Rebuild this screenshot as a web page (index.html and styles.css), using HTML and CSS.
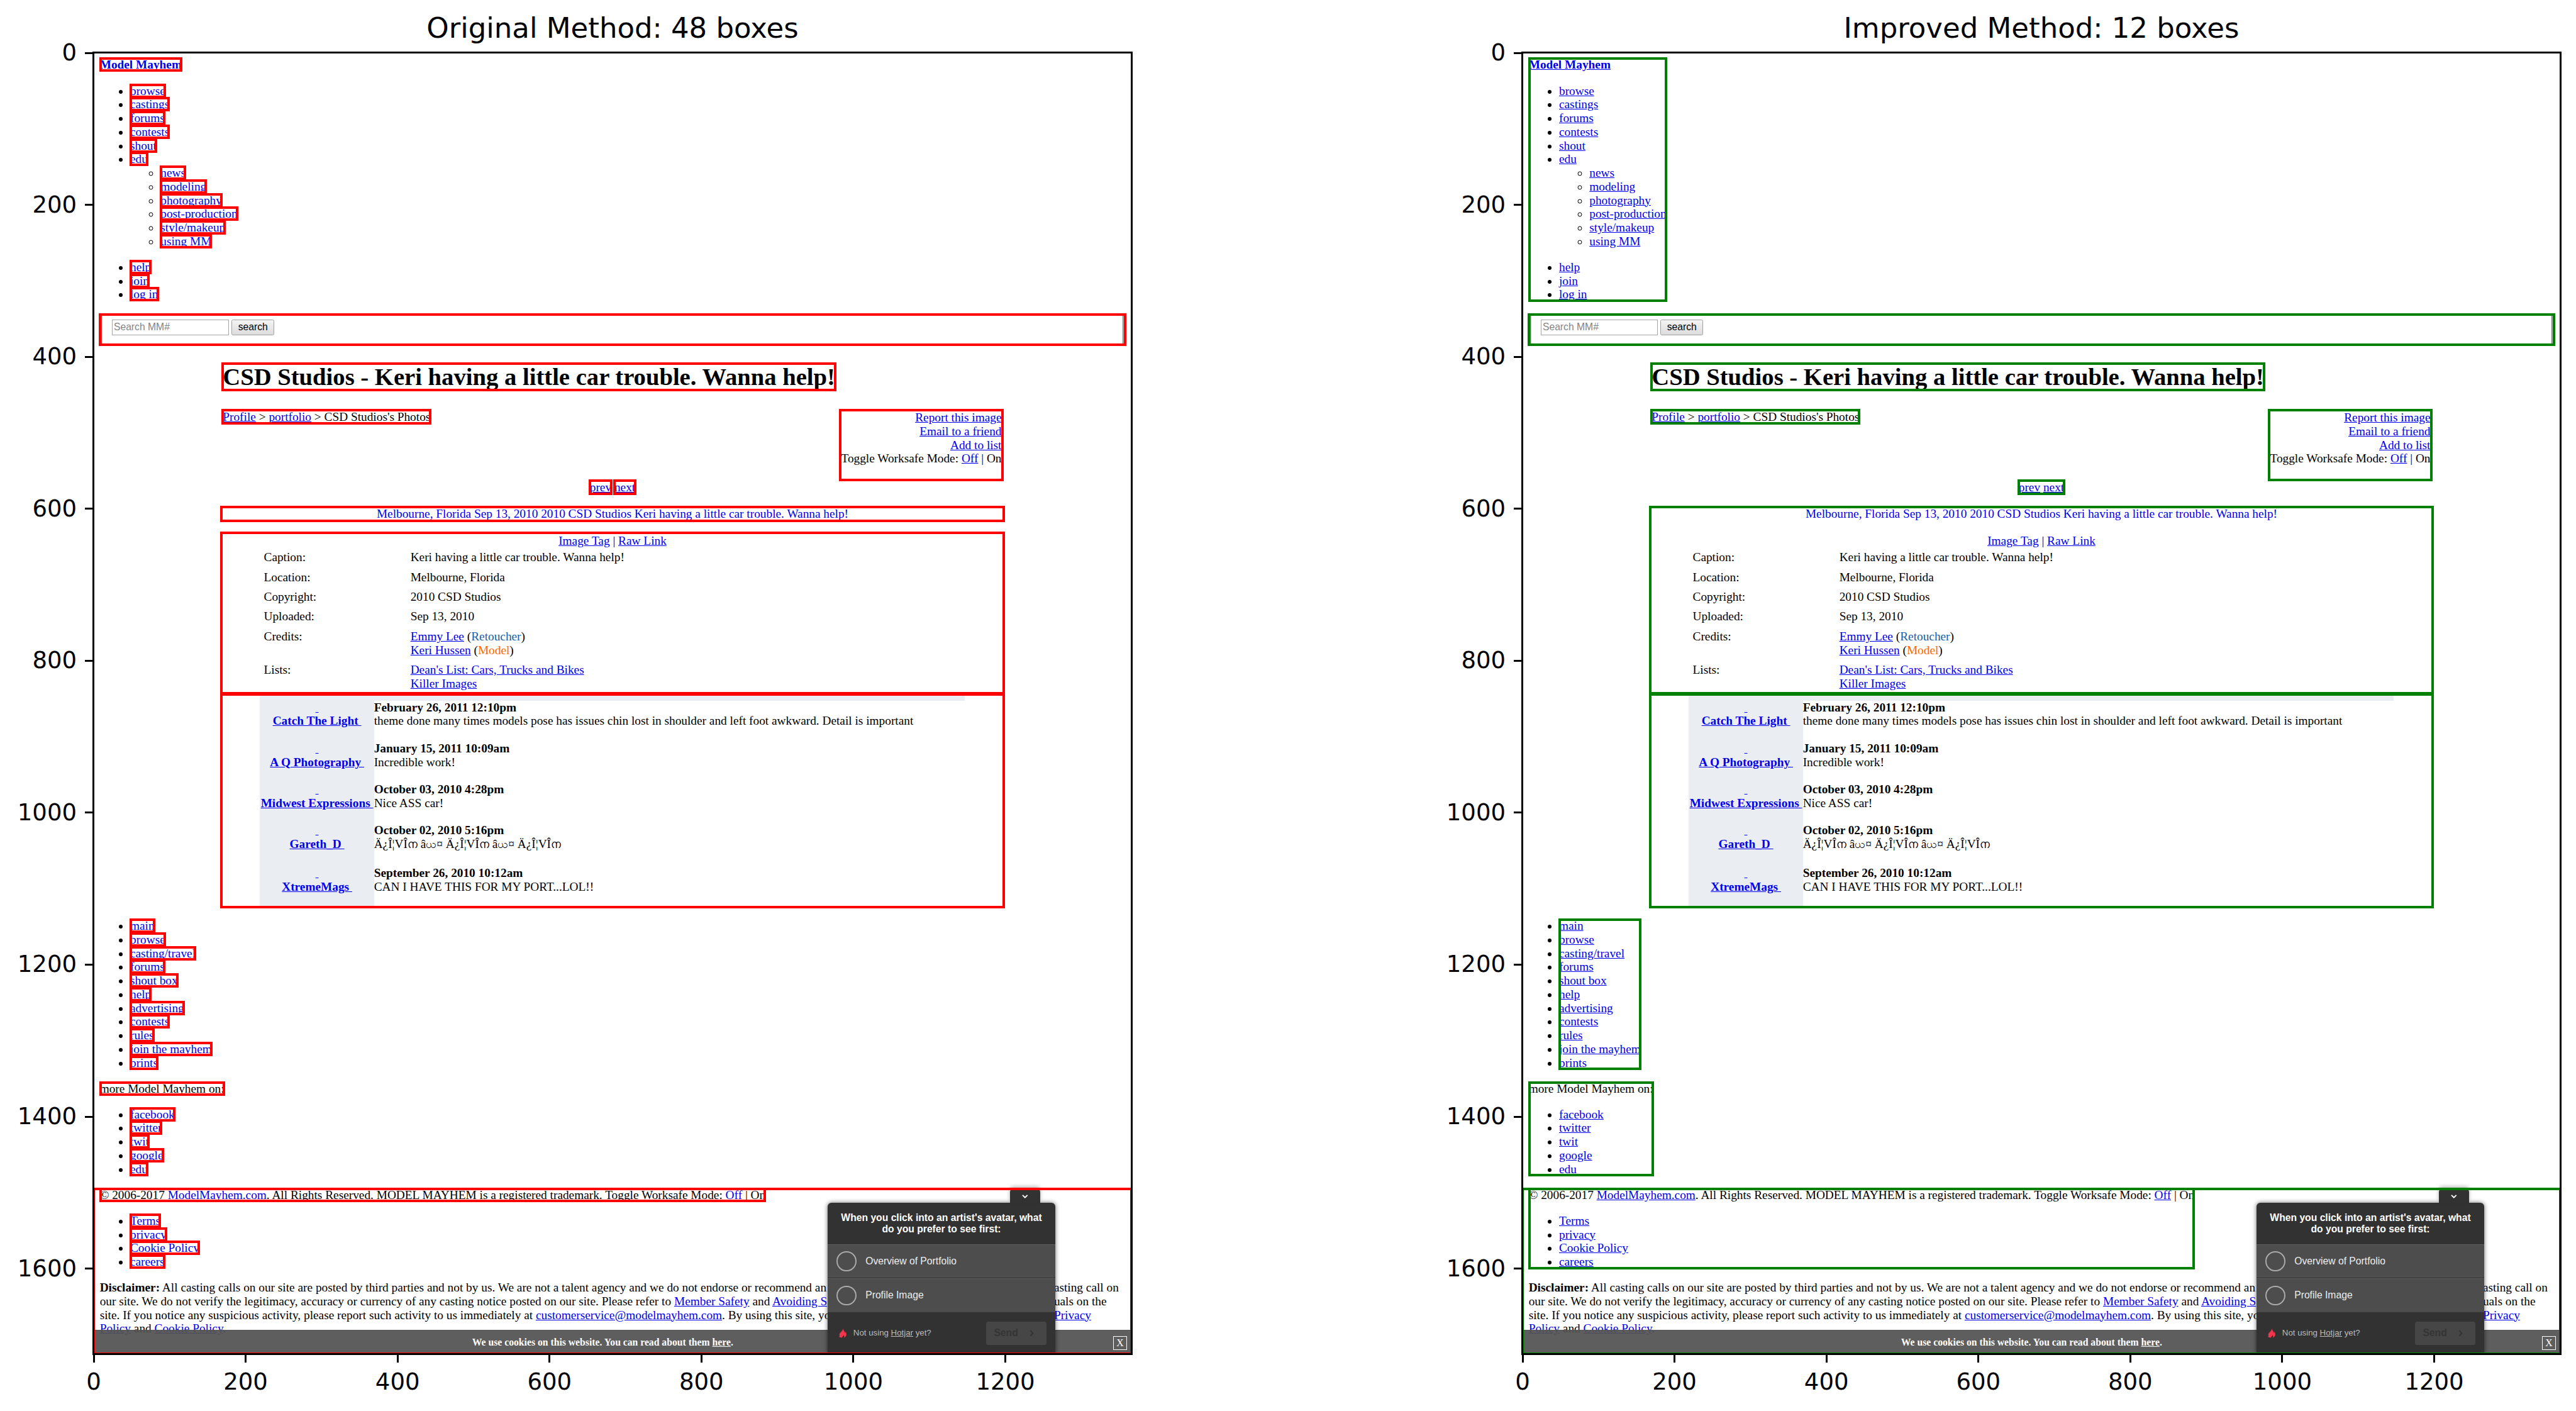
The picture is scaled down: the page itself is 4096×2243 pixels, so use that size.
FILE: index.html
```html
<!DOCTYPE html>
<html lang="en">
<head>
<meta charset="utf-8">
<title>Original Method and Improved Method</title>
<link rel="stylesheet" href="styles.css">
</head>
<body>
<main class="figure">
  <figure class="plot plot-words">
    <figcaption class="plot-title">Original Method: 48 boxes</figcaption>
    <div class="frame"></div>
  </figure>
  <figure class="plot plot-groups">
    <figcaption class="plot-title">Improved Method: 12 boxes</figcaption>
    <div class="frame"></div>
  </figure>
</main>

<template id="capture">
  <div class="capture">
    <header class="group fit">
      <strong><a class="word" href="#">Model Mayhem</a></strong>
      <ul class="links">
        <li><a class="word" href="#">browse</a></li>
        <li><a class="word" href="#">castings</a></li>
        <li><a class="word" href="#">forums</a></li>
        <li><a class="word" href="#">contests</a></li>
        <li><a class="word" href="#">shout</a></li>
        <li><a class="word" href="#">edu</a>
          <ul>
            <li><a class="word" href="#">news</a></li>
            <li><a class="word" href="#">modeling</a></li>
            <li><a class="word" href="#">photography</a></li>
            <li><a class="word" href="#">post-production</a></li>
            <li><a class="word" href="#">style/makeup</a></li>
            <li><a class="word" href="#">using MM</a></li>
          </ul>
        </li>
      </ul>
      <ul class="links">
        <li><a class="word" href="#">help</a></li>
        <li><a class="word" href="#">join</a></li>
        <li><a class="word" href="#">log in</a></li>
      </ul>
    </header>

    <form class="search both">
      <fieldset>
        <input type="text" placeholder="Search MM#" aria-label="Search MM#">
        <button type="button">search</button>
      </fieldset>
    </form>

    <div class="content">
      <h1><span class="both">CSD Studios - Keri having a little car trouble. Wanna help!</span></h1>
      <div class="topline">
        <div><span class="both"><a href="#">Profile</a> &gt; <a href="#">portfolio</a> &gt; CSD Studios's Photos</span></div>
        <div class="actions both">
          <a href="#">Report this image</a><br>
          <a href="#">Email to a friend</a><br>
          <a href="#">Add to list</a><br>
          Toggle Worksafe Mode: <a href="#">Off</a> | On
        </div>
      </div>
      <div class="pager"><span class="group"><a class="word" href="#">prev</a> <a class="word" href="#">next</a></span></div>
      <section class="group">
        <a class="photo word" href="#">Melbourne, Florida Sep 13, 2010 2010 CSD Studios Keri having a little car trouble. Wanna help!</a>
        <div class="details word">
          <div class="codes"><a href="#">Image Tag</a> | <a href="#">Raw Link</a></div>
          <table class="facts">
            <tr><th scope="row">Caption:</th><td>Keri having a little car trouble. Wanna help!</td></tr>
            <tr><th scope="row">Location:</th><td>Melbourne, Florida</td></tr>
            <tr><th scope="row">Copyright:</th><td>2010 CSD Studios</td></tr>
            <tr><th scope="row">Uploaded:</th><td>Sep 13, 2010</td></tr>
            <tr><th scope="row">Credits:</th><td><a href="#">Emmy Lee</a> (<span class="retoucher">Retoucher</span>)<br><a href="#">Keri Hussen</a> (<span class="model">Model</span>)</td></tr>
            <tr><th scope="row">Lists:</th><td><a href="#">Dean's List: Cars, Trucks and Bikes</a><br><a href="#">Killer Images</a></td></tr>
          </table>
        </div>
      </section>
      <section class="comments both">
        <table>
          <tr><th scope="row"><a href="#">&nbsp;<br>Catch The Light&nbsp;</a></th><td><b>February 26, 2011 12:10pm</b><br>theme done many times models pose has issues chin lost in shoulder and left foot awkward. Detail is important</td></tr>
          <tr><th scope="row"><a href="#">&nbsp;<br>A Q Photography&nbsp;</a></th><td><b>January 15, 2011 10:09am</b><br>Incredible work!</td></tr>
          <tr><th scope="row"><a href="#">&nbsp;<br>Midwest Expressions&nbsp;</a></th><td><b>October 03, 2010 4:28pm</b><br>Nice ASS car!</td></tr>
          <tr class="tall"><th scope="row"><a href="#">&nbsp;<br>Gareth_D&nbsp;</a></th><td><b>October 02, 2010 5:16pm</b><br>Ä¿Î¦VÎ<span class="odd">ന</span> â<span class="odd">ယ</span>¤ Ä¿Î¦VÎ<span class="odd">ന</span> â<span class="odd">ယ</span>¤ Ä¿Î¦VÎ<span class="odd">ന</span></td></tr>
          <tr><th scope="row"><a href="#">&nbsp;<br>XtremeMags&nbsp;</a></th><td><b>September 26, 2010 10:12am</b><br>CAN I HAVE THIS FOR MY PORT...LOL!!</td></tr>
        </table>
      </section>
    </div>

    <footer>
      <ul class="links sitemap group fit">
        <li><a class="word" href="#">main</a></li>
        <li><a class="word" href="#">browse</a></li>
        <li><a class="word" href="#">casting/travel</a></li>
        <li><a class="word" href="#">forums</a></li>
        <li><a class="word" href="#">shout box</a></li>
        <li><a class="word" href="#">help</a></li>
        <li><a class="word" href="#">advertising</a></li>
        <li><a class="word" href="#">contests</a></li>
        <li><a class="word" href="#">rules</a></li>
        <li><a class="word" href="#">join the mayhem</a></li>
        <li><a class="word" href="#">prints</a></li>
      </ul>
      <div class="group fit block">
        <span class="word">more Model Mayhem on:</span>
        <ul class="links">
          <li><a class="word" href="#">facebook</a></li>
          <li><a class="word" href="#">twitter</a></li>
          <li><a class="word" href="#">twit</a></li>
          <li><a class="word" href="#">google</a></li>
          <li><a class="word" href="#">edu</a></li>
        </ul>
      </div>
      <div class="group fit block">
        <span class="word">© 2006-2017 <a href="#">ModelMayhem.com</a>. All Rights Reserved. MODEL MAYHEM is a registered trademark. Toggle Worksafe Mode: <a href="#">Off</a> | On</span>
        <ul class="links">
          <li><a class="word" href="#">Terms</a></li>
          <li><a class="word" href="#">privacy</a></li>
          <li><a class="word" href="#">Cookie Policy</a></li>
          <li><a class="word" href="#">careers</a></li>
        </ul>
      </div>
      <div class="disclaimer block">
        <div class="line"><span><b>Disclaimer:</b> All casting calls on our site are posted by third parties and not by us. We are not a talent agency and we do not endorse or recommend an</span><span>asting call on</span></div>
        <div class="line"><span>our site. We do not verify the legitimacy, accuracy or currency of any casting notice posted on our site. Please refer to <a href="#">Member Safety</a> and <a href="#">Avoiding S</a></span><span>uals on the</span></div>
        <div class="line"><span>site. If you notice any suspicious activity, please report such activity to us immediately at <a href="#">customerservice@modelmayhem.com</a>. By using this site, yo</span><span><a href="#">Privacy</a></span></div>
        <div><a href="#">Policy</a> and <a href="#">Cookie Policy</a>.</div>
      </div>
    </footer>

    <div class="cookies">
      <span class="cookies-text">We use cookies on this website. You can read about them <a href="#">here</a>.</span>
      <button type="button" class="cookies-close">X</button>
    </div>

    <form class="poll">
      <button type="button" class="poll-tab" aria-label="Hide">
        <svg viewBox="0 0 10 8" width="8" height="7"><path d="M1 1.5 L5 5.5 L9 1.5" fill="none" stroke="#fff" stroke-width="2"/></svg>
      </button>
      <div class="poll-question">When you click into an artist's avatar, what do you prefer to see first:</div>
      <label class="poll-option"><input type="radio" name="first">Overview of Portfolio</label>
      <label class="poll-option"><input type="radio" name="first">Profile Image</label>
      <div class="poll-foot">
        <svg viewBox="0 0 10 12" width="10" height="12"><path d="M5.2 0 C5.6 2.5 7.6 3.2 7.8 5.6 C8.4 5.4 8.6 4.8 8.6 4.2 C9.6 5.4 10 7 9.6 8.6 C9.2 10.4 8 11.4 6.6 12 C7.3 10.6 7 9.4 6.2 8.4 C5.8 9.8 4.2 10.2 4 12 C2.6 11.8 .8 11.6 .2 11 C1 10.4 .6 9.2 .6 8 C.7 6.2 2 5.2 2.6 4.6 C4 3.4 5 2 5.2 0 Z" fill="#f4364c"/></svg>
        <span>Not using <a href="#">Hotjar</a> yet?</span>
        <button type="button" disabled>Send
          <svg viewBox="0 0 6 10" width="6" height="9"><path d="M1 1 L4.5 5 L1 9" fill="none" stroke="#343434" stroke-width="2"/></svg>
        </button>
      </div>
    </form>
    <div class="region"></div>
  </div>
</template>
<script src="script.js"></script>
</body>
</html>
```
FILE: script.js
```js
const PAGE = { width: 1366, height: 1712 };
const STEP = 200;

function addTicks(frame, axis, length) {
  for (let value = 0; value < length; value += STEP) {
    const tick = document.createElement('div');
    tick.className = 'tick tick-' + axis;
    tick.style.setProperty('--at', (value / length * 100) + '%');
    tick.textContent = value;
    frame.append(tick);
  }
}

for (const frame of document.querySelectorAll('.frame')) {
  frame.append(document.getElementById('capture').content.cloneNode(true));
  addTicks(frame, 'x', PAGE.width);
  addTicks(frame, 'y', PAGE.height);
}
```
FILE: styles.css
```css
* { box-sizing: border-box; }

body { margin: 0; background: #fff; }

/* Two plots side by side */
.figure {
  display: grid;
  grid-template-columns: 1fr 1fr;
  gap: 622px;
  padding: 18px 25px 91px 149px;
}
.plot { margin: 0; min-width: 0; }
.plot-words { --mark: #f00; }
.plot-groups { --mark: #008000; }
.plot-title {
  margin-bottom: 12px;
  font: 45px/54px "DejaVu Sans", sans-serif;
  text-align: center;
}
.frame { position: relative; }
.frame::after {
  content: "";
  position: absolute;
  inset: -2px;
  border: 3px solid #000;
  pointer-events: none;
}

/* Axis ticks, placed by their value */
.tick {
  position: absolute;
  display: flex;
  align-items: center;
  gap: 13px;
  font: 37px/44px "DejaVu Sans", sans-serif;
}
.tick::after { content: ""; flex: none; background: #000; }
.tick-y { top: var(--at); right: 100%; height: 0; margin-right: 1px; }
.tick-y::after { width: 13px; height: 3px; }
.tick-x { left: var(--at); top: 100%; width: 0; flex-direction: column-reverse; gap: 9px; margin-top: 1px; }
.tick-x::after { width: 3px; height: 13px; }

/* The captured page, in its own CSS pixels */
.capture {
  zoom: 1.208;
  position: relative;
  overflow: hidden;
  aspect-ratio: 1366 / 1712;
  padding: 7px 8px 8px;
  font: 16px/18px "Liberation Serif", "Times New Roman", serif;
  color: #000;
}
.capture a { color: #00e; text-decoration: underline; }
.capture ul { margin: 0; padding-left: 40px; }
.capture .links { margin-top: 16px; }
.capture .links ul { margin: 0; }
.capture table { border-spacing: 0; }
.capture th, .capture td { padding: 0; text-align: left; vertical-align: top; }
.fit { width: fit-content; }
.block { margin: 16px 0 0; }

/* Detected boxes */
.both,
.plot-words .word,
.plot-groups .group {
  outline: 4px solid var(--mark);
  outline-offset: -2px;
}
.plot-words .fit .word,
.plot-groups .fit { outline-offset: -3px; }
.region {
  position: absolute;
  inset: 1493px -2px -2px -2px;
  border: 4px solid var(--mark);
  pointer-events: none;
}

.search { margin-top: 17px; height: 40px; }
.search fieldset {
  display: flex;
  gap: 4px;
  margin: 0 2px;
  height: 40px;
  padding: 5px 12px;
  border: 2px groove #c0c0c0;
}
.search input, .search button {
  height: 21px;
  font: 13px "Liberation Sans", Arial, sans-serif;
}
.search input { width: 154px; padding: 1px 2px; border: 1px solid #a6a6a6; }
.search input::placeholder { color: #858585; }
.search button {
  width: 56px;
  padding: 0;
  border: 1px solid #a0a0a0;
  border-radius: 2px;
  background: linear-gradient(#f4f4f4, #dcdcdc);
  color: #000;
}

.content { width: 1030px; margin: 24px auto 0; }
.capture h1 { margin: 0 2px 25px; font-size: 32px; line-height: 37px; }
.topline { display: flex; justify-content: space-between; margin: 0 2px; }
.actions { height: 92px; padding: 1px; text-align: right; }
.pager { margin-top: 1px; text-align: center; }
.capture .photo {
  display: block;
  height: 18px;
  margin-top: 17px;
  text-align: center;
  text-decoration: none;
}
.details { height: 211px; margin-top: 16px; padding-top: 1px; }
.codes { text-align: center; }
.facts th { width: 193px; font-weight: 400; }
.facts { margin-left: 56px; }
.capture .facts th, .capture .facts td { padding: 4px 0; }
.retoucher { color: #1560a8; }
.model { color: #ff6a00; }

.comments { height: 280px; margin-top: 1px; overflow: hidden; }
.comments table { width: 928px; margin-left: 51px; border-top: 9px solid #eaeef3; }
.comments tr { height: 54px; }
.comments .tall { height: 56px; }
.comments th { width: 150px; background: #eaeef3; }
.capture .comments th { text-align: center; }
.odd { font-size: 14px; line-height: 1; }

.capture .sitemap { margin-left: 40px; padding-left: 0; }

/* Each line runs on either side of the poll */
.disclaimer .line {
  display: grid;
  grid-template-columns: 959px 1fr;
  column-gap: 297px;
  white-space: nowrap;
}

/* Cookie notice pinned to the bottom of the page */
.cookies {
  position: absolute;
  inset: auto 0 0 0;
  display: flex;
  align-items: center;
  height: 31px;
  padding-right: 6px;
  border-top: 1px solid #555;
  background: rgba(82, 82, 82, .93);
  color: #fff;
  font-size: 13px;
  font-weight: 700;
}
.cookies-text { flex: 1; padding-right: 2px; text-align: center; }
.capture .cookies a { color: #fff; }
.cookies-close {
  width: 18px;
  height: 18px;
  margin-top: 2px;
  padding: 0;
  border: 1px solid #fff;
  background: none;
  color: #fff;
  font: 13px/16px "Liberation Serif", serif;
}

/* Poll floating over the page */
.poll {
  position: absolute;
  right: 100px;
  bottom: 0;
  width: 300px;
  border-radius: 5px 5px 0 0;
  background: #323232;
  box-shadow: 0 0 6px rgba(0, 0, 0, .6);
  color: #fff;
  font: 13px/15px "Liberation Sans", Arial, sans-serif;
}
.poll-tab {
  position: absolute;
  right: 20px;
  bottom: 100%;
  width: 40px;
  height: 18px;
  padding: 0;
  border: 0;
  border-radius: 4px 4px 0 0;
  background: #323232;
  box-shadow: 0 -3px 5px rgba(0, 0, 0, .3);
}
.poll-question { padding: 13px 15px 12px; font-weight: 700; text-align: center; }
.poll-option {
  display: flex;
  align-items: center;
  gap: 12px;
  height: 45px;
  padding: 0 12px;
  border-top: 1px solid #606060;
  border-bottom: 1px solid #303030;
  background: #4d4d4d;
  color: #eee;
}
.poll-option input {
  appearance: none;
  width: 26px;
  height: 26px;
  margin: 0;
  border: 2px solid #aaa;
  border-radius: 50%;
}
.poll-foot {
  display: flex;
  align-items: center;
  gap: 9px;
  height: 54px;
  padding: 0 12px 0 15px;
  font-size: 11px;
  color: #bbb;
}
.capture .poll-foot a { color: #bbb; }
.poll-foot button {
  display: flex;
  align-items: center;
  justify-content: space-between;
  width: 79px;
  height: 31px;
  margin-left: auto;
  padding: 0 16px 0 10px;
  border: 0;
  border-radius: 3px;
  background: #464646;
  color: #343434;
  font: 700 13px "Liberation Sans", Arial, sans-serif;
}
```
